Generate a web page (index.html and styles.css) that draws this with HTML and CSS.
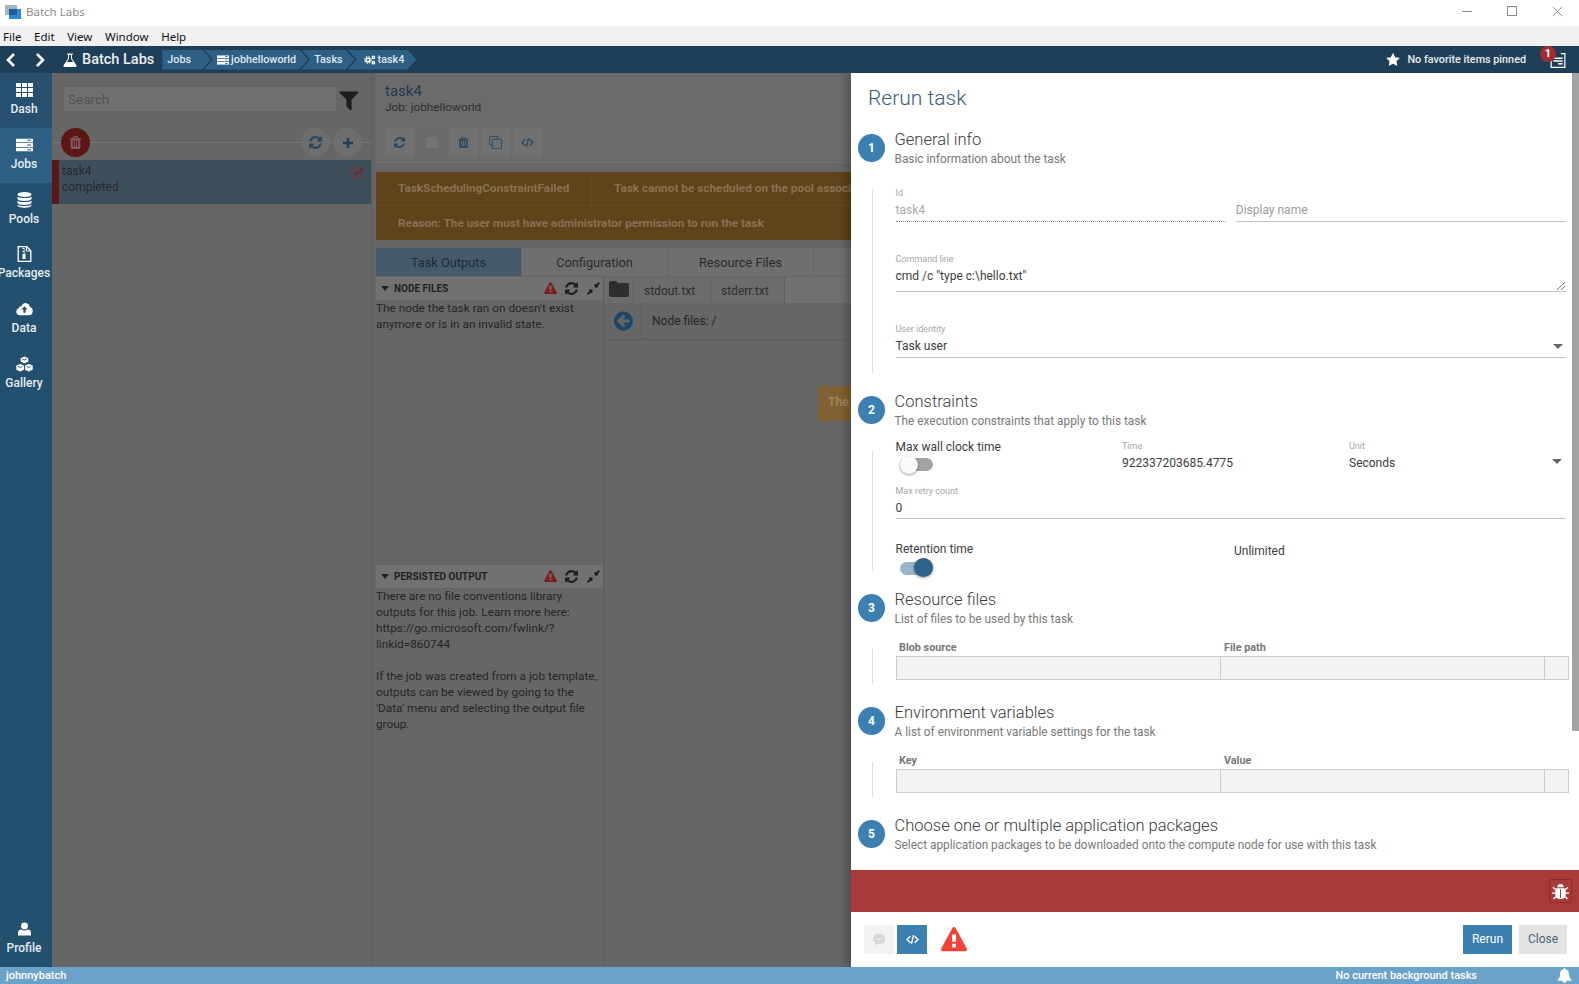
FILE: index.html
```html
<!DOCTYPE html>
<html lang="en">
<head>
<meta charset="utf-8">
<title>Batch Labs</title>
<link rel="stylesheet" href="styles.css">
</head>
<body>
<svg class="defs" width="0" height="0" aria-hidden="true">
  <symbol id="i-refresh" viewBox="0 0 1792 1792"><path d="M1639 1056q0 5-1 7-64 268-268 434.500t-478 166.500q-146 0-282.500-55t-243.500-157l-129 129q-19 19-45 19t-45-19-19-45v-448q0-26 19-45t45-19h448q26 0 45 19t19 45-19 45l-137 137q71 66 161 102t187 36q134 0 250-65t186-179q11-17 53-117 8-23 30-23h192q13 0 22.500 9.500t9.500 22.500zm25-800v448q0 26-19 45t-45 19h-448q-26 0-45-19t-19-45 19-45l138-138q-148-137-349-137-134 0-250 65t-186 179q-11 17-53 117-8 23-30 23h-199q-13 0-22.500-9.500t-9.500-22.500v-7q65-268 270-434.500t480-166.500q146 0 284 55.500t245 156.500l130-129q19-19 45-19t45 19 19 45z"/></symbol>
  <symbol id="i-trash" viewBox="0 0 1792 1792"><path d="M704 1376v-704q0-14-9-23t-23-9h-64q-14 0-23 9t-9 23v704q0 14 9 23t23 9h64q14 0 23-9t9-23zm256 0v-704q0-14-9-23t-23-9h-64q-14 0-23 9t-9 23v704q0 14 9 23t23 9h64q14 0 23-9t9-23zm256 0v-704q0-14-9-23t-23-9h-64q-14 0-23 9t-9 23v704q0 14 9 23t23 9h64q14 0 23-9t9-23zm-544-992h448l-48-117q-7-9-17-11h-317q-10 2-17 11zm928 32v64q0 14-9 23t-23 9h-96v948q0 83-47 143.500t-113 60.500h-832q-66 0-113-58.500t-47-141.500v-952h-96q-14 0-23-9t-9-23v-64q0-14 9-23t23-9h309l70-167q15-37 54-63t79-26h320q40 0 79 26t54 63l70 167h309q14 0 23 9t9 23z"/></symbol>
  <symbol id="i-warn" viewBox="0 0 1792 1792"><path d="M1024 1375v-190q0-14-9.500-23.500t-22.500-9.500h-192q-13 0-22.500 9.500t-9.500 23.500v190q0 14 9.500 23.500t22.500 9.500h192q13 0 22.500-9.500t9.500-23.500zm-2-374l18-459q0-12-10-19-13-11-24-11h-220q-11 0-24 11-10 7-10 21l17 457q0 10 10 16.500t24 6.500h185q14 0 23.500-6.500t10.500-16.500zm-14-934l768 1408q35 63-2 126-17 29-46.500 46t-63.500 17h-1536q-34 0-63.500-17t-46.500-46q-37-63-2-126l768-1408q17-31 47-49t65-18 65 18 47 49z"/></symbol>
  <symbol id="i-filter" viewBox="0 0 1792 1792"><path d="M1595 295q17 41-14 70l-493 493v742q0 42-39 59-13 5-25 5-27 0-45-19l-256-256q-19-19-19-45v-486l-493-493q-31-29-14-70 17-39 59-39h1280q42 0 59 39z"/></symbol>
  <symbol id="i-star" viewBox="0 0 1792 1792"><path d="M1728 647q0 22-26 48l-363 354 86 500q1 7 1 20 0 21-10.500 35.500t-30.500 14.500q-19 0-40-12l-449-236-449 236q-22 12-40 12-21 0-31.500-14.500t-10.500-35.500q0-6 2-20l86-500-364-354q-25-27-25-48 0-37 56-46l502-73 225-455q19-41 49-41t49 41l225 455 502 73q56 9 56 46z"/></symbol>
  <symbol id="i-back" viewBox="0 0 1792 1792"><path d="M1280 960v-128q0-26-19-45t-45-19h-502l189-189q19-19 19-45t-19-45l-91-91q-18-18-45-18t-45 18l-362 362-91 91q-18 18-18 45t18 45l91 91 362 362q18 18 45 18t45-18l91-91q18-18 18-45t-18-45l-189-189h502q26 0 45-19t19-45zm256-64q0 209-103 385.500t-279.500 279.500-385.500 103-385.500-103-279.500-279.500-103-385.500 103-385.500 279.500-279.500 385.500-103 385.500 103 279.500 279.500 103 385.500z"/></symbol>
  <symbol id="i-bell" viewBox="0 0 1792 1792"><path d="M912 1696q0-16-16-16-59 0-101.500-42.500t-42.500-101.500q0-16-16-16t-16 16q0 73 51.500 124.500t124.500 51.500q16 0 16-16zm816-288q0 52-38 90t-90 38h-448q0 106-75 181t-181 75-181-75-75-181h-448q-52 0-90-38t-38-90q50-42 91-88t85-119.500 74.500-158.500 50-206 19.500-260q0-152 117-282.500t307-158.500q-8-19-8-39 0-40 28-68t68-28 68 28 28 68q0 20-8 39 190 28 307 158.500t117 282.500q0 139 19.500 260t50 206 74.500 158.500 85 119.500 91 88z"/></symbol>
  <symbol id="i-code" viewBox="0 0 24 24"><path d="M8 6l-6 6 6 6M16 6l6 6-6 6M14 4l-4 16" fill="none" stroke="currentColor" stroke-width="2.600"/></symbol>
  <symbol id="i-server" viewBox="0 0 18 14"><path d="M0 0h18v4H0zM0 5h18v4H0zM0 10h18v4H0z"/><path d="M12 1.500h4v1h-4zM12 6.500h4v1h-4zM12 11.500h4v1h-4z" fill="#24506f"/></symbol>
  <symbol id="i-cog" viewBox="0 0 26 22"><circle cx="8.500" cy="11" r="4" fill="none" stroke="currentColor" stroke-width="3.500"/><circle cx="8.500" cy="11" r="6.800" fill="none" stroke="currentColor" stroke-width="3" stroke-dasharray="3 2.340"/><circle cx="20.500" cy="5" r="2.600" fill="none" stroke="currentColor" stroke-width="3"/><circle cx="20.500" cy="17" r="2.600" fill="none" stroke="currentColor" stroke-width="3"/></symbol>
  <symbol id="i-compress" viewBox="0 0 20 20"><path d="M19 1l-6 6M13 3v4h4M1 19l6-6M3 13h4v4" fill="none" stroke="currentColor" stroke-width="2.800"/></symbol>
</svg>

<header class="titlebar">
  <svg class="app-logo" viewBox="0 0 16 14"><rect width="12" height="10" fill="#9fb6c6"/><rect x="4" y="4" width="12" height="10" fill="#2d8ad6"/><rect x="4" y="4" width="8" height="6" fill="#1b5d96"/></svg>
  <span class="app-title">Batch Labs</span>
  <div class="win-controls">
    <span class="win-min"></span>
    <span class="win-max"></span>
    <svg class="win-close" viewBox="0 0 12 12"><path d="M1 1l10 10M11 1L1 11" stroke="#8a8a8a" stroke-width="1" fill="none"/></svg>
  </div>
</header>
<nav class="menubar"><span>File</span><span>Edit</span><span>View</span><span>Window</span><span>Help</span></nav>

<div class="topbar">
  <svg class="nav-arrow" viewBox="0 0 10 16"><path d="M8 2L2 8l6 6" fill="none" stroke="#fff" stroke-width="2.600"/></svg>
  <svg class="nav-arrow nav-fwd" viewBox="0 0 10 16"><path d="M2 2l6 6-6 6" fill="none" stroke="#fff" stroke-width="2.600"/></svg>
  <div class="brand">
    <svg class="flask" viewBox="0 0 14 14"><path d="M4 .5h6v1H9v4l4.500 7q.5 1-.7 1.500H1.200Q0 13.500.5 12.500L5 5.500v-4H4z" fill="#fff"/><path d="M6 2v3.800L3.800 9h6.400L8 5.800V2z" fill="#1f3f58"/></svg>
    <span>Batch Labs</span>
  </div>
  <ol class="crumbs">
    <li class="crumb crumb-first">Jobs</li>
    <li class="crumb"><svg class="crumb-icon" viewBox="0 0 18 14" fill="#fff"><use href="#i-server"/></svg>jobhelloworld</li>
    <li class="crumb">Tasks</li>
    <li class="crumb crumb-last"><svg class="crumb-icon" viewBox="0 0 26 22" color="#fff"><use href="#i-cog"/></svg>task4</li>
  </ol>
  <div class="favorites">
    <svg class="fav-star" fill="#fff"><use href="#i-star"/></svg>
    <span>No favorite items pinned</span>
  </div>
  <div class="notes">
    <svg viewBox="0 0 16 16" class="notes-icon"><path d="M.7 2.700h3M11 .7h4.300v14.600H.7V2.700" fill="none" stroke="#fff" stroke-width="1.300"/><path d="M3 5.500h10M3 8.500h10M8 11.500h5" stroke="#fff" stroke-width="1.600"/></svg>
    <span class="badge">1</span>
  </div>
</div>

<div class="workspace">
  <aside class="sidebar">
    <a class="nav-item nav-dash">
      <svg class="nav-icon" viewBox="0 0 17 14" fill="#fff"><path d="M0 0h5v4H0zM6 0h5v4H6zM12 0h5v4h-5zM0 5h5v4H0zM6 5h5v4H6zM12 5h5v4h-5zM0 10h5v4H0zM6 10h5v4H6zM12 10h5v4h-5z"/></svg>
      <span>Dash</span>
    </a>
    <a class="nav-item nav-active">
      <svg class="nav-icon" viewBox="0 0 18 14" fill="#fff"><use href="#i-server"/></svg>
      <span>Jobs</span>
    </a>
    <a class="nav-item">
      <svg class="nav-icon" viewBox="0 0 14 16" fill="#fff"><ellipse cx="7" cy="2.500" rx="7" ry="2.500"/><path d="M0 4.500C1 6.500 13 6.500 14 4.500V7c-1 2.500-13 2.500-14 0zM0 8.500c1 2 13 2 14 0V11c-1 2.500-13 2.500-14 0zM0 12.500c1 2 13 2 14 0v1c-1 3-13 3-14 0z"/></svg>
      <span>Pools</span>
    </a>
    <a class="nav-item">
      <svg class="nav-icon" viewBox="0 0 14 16"><path d="M.7.700h8.500l4.100 4.100v10.500H.7z" fill="none" stroke="#fff" stroke-width="1.300"/><path d="M9 1v4h4" fill="none" stroke="#fff"/><path d="M5 2h2v1H5zM6 3.500h2v1H6zM5 5h2v1H5zM6 6.500h2v1H6zM5 8h3v5H5z" fill="#fff"/></svg>
      <span>Packages</span>
    </a>
    <a class="nav-item">
      <svg class="nav-icon" viewBox="0 0 18 14"><path d="M4.500 13.500Q.5 13.500.3 9.800.3 7 2.800 6.300 3.200 3.800 5.800 4 7.300.5 10.800.8q3.500.4 3.900 4.200 3 .7 3 4 0 4.500-4 4.500z" fill="#fff"/><path d="M9 4L5.800 7.500h2V11h2.400V7.500h2z" fill="#24506f"/></svg>
      <span>Data</span>
    </a>
    <a class="nav-item">
      <svg class="nav-icon" viewBox="0 0 16 14" fill="#fff"><path d="M8 0l3.600 1.500v3.400L8 6.400 4.400 4.900V1.500zM4 7l3.500 1.500v3.800L4 14 .3 12.300V8.500zM12 7l3.700 1.500v3.800L12 14l-3.500-1.700V8.500z"/><path d="M5.800 2.300L8 3.200l2.200-.9M1.700 9.300L4 10.200l2.100-.9M9.900 9.300l2.100.9 2.300-.9" fill="none" stroke="#24506f" stroke-width=".8"/></svg>
      <span>Gallery</span>
    </a>
    <a class="nav-item nav-profile">
      <svg class="nav-icon" viewBox="0 0 14 14" fill="#fff"><circle cx="7" cy="3.700" r="3.700"/><path d="M0 14v-2.500Q0 7.800 3.500 7.500 7 9.500 10.500 7.500 14 7.800 14 11.500V14z"/></svg>
      <span>Profile</span>
    </a>
  </aside>

  <div class="stage">
    <section class="list-pane">
      <div class="search-row">
        <div class="search-box">Search</div>
        <svg class="filter-icon" fill="#1d1d1d"><use href="#i-filter"/></svg>
      </div>
      <div class="list-actions">
        <button class="fab fab-danger"><svg class="fab-svg" fill="#7f5a5a"><use href="#i-trash"/></svg></button>
        <span class="fab-spacer"></span>
        <button class="fab"><svg class="fab-svg" fill="#2a475e"><use href="#i-refresh"/></svg></button>
        <button class="fab"><svg class="plus-svg" viewBox="0 0 12 12"><path d="M6 1v10M1 6h10" stroke="#1f3f58" stroke-width="2.500"/></svg></button>
      </div>
      <div class="list-row">
        <div class="list-row-text">task4<br>completed</div>
        <svg class="row-check" viewBox="0 0 12 10"><path d="M10 6v3.500H.5V.5h8" fill="none" stroke="#7a3038" stroke-width="1"/><path d="M3 4l2.500 2.500L11 1" fill="none" stroke="#7a2028" stroke-width="1.800"/></svg>
      </div>
    </section>

    <section class="detail">
      <div class="detail-head">
        <h1>task4</h1>
        <p>Job: jobhelloworld</p>
        <div class="tool-row">
          <button class="tool"><svg class="tool-svg" fill="#2a475e"><use href="#i-refresh"/></svg></button>
          <button class="tool tool-off"><span class="stop"></span></button>
          <button class="tool"><svg class="tool-svg" fill="#2c4a60"><use href="#i-trash"/></svg></button>
          <button class="tool"><svg class="tool-svg" viewBox="0 0 14 14"><path d="M.5.500h9v9h-9z" fill="none" stroke="#2c4a60"/><path d="M3.500 3.500h10v10h-10z" fill="#717171" stroke="#2c4a60"/></svg></button>
          <button class="tool"><svg class="tool-svg" color="#2c4a60"><use href="#i-code"/></svg></button>
        </div>
      </div>
      <div class="alert">
        <div class="alert-row">
          <div class="alert-code">TaskSchedulingConstraintFailed</div>
          <div class="alert-msg">Task cannot be scheduled on the pool associ</div>
        </div>
        <div class="alert-reason">Reason: The user must have administrator permission to run the task</div>
      </div>
      <div class="tabs">
        <div class="tab tab-active">Task Outputs</div>
        <div class="tab">Configuration</div>
        <div class="tab">Resource Files</div>
        <div class="tab"></div>
      </div>
      <div class="outputs">
        <div class="files-col">
          <div class="files-head">
            <span class="caret"></span><span class="files-title">NODE FILES</span>
            <svg class="fh-warn" fill="#7a1f1f"><use href="#i-warn"/></svg>
            <svg class="fh-ref" fill="#1d1d1d"><use href="#i-refresh"/></svg>
            <svg class="fh-cmp" color="#1d1d1d"><use href="#i-compress"/></svg>
          </div>
          <div class="files-body">The node the task ran on doesn't exist anymore or is in an invalid state.</div>
          <div class="files-head">
            <span class="caret"></span><span class="files-title">PERSISTED OUTPUT</span>
            <svg class="fh-warn" fill="#7a1f1f"><use href="#i-warn"/></svg>
            <svg class="fh-ref" fill="#1d1d1d"><use href="#i-refresh"/></svg>
            <svg class="fh-cmp" color="#1d1d1d"><use href="#i-compress"/></svg>
          </div>
          <div class="files-body files-body-last">There are no file conventions library outputs for this job. Learn more here: https://go.microsoft.com/fwlink/?linkid=860744<br><br>If the job was created from a job template, outputs can be viewed by going to the 'Data' menu and selecting the output file group.</div>
        </div>
        <div class="viewer">
          <div class="viewer-tabs">
            <div class="vtab vtab-folder"><svg class="folder" viewBox="0 0 20 16"><path d="M2 0h5l2 2h9q2 0 2 2v10q0 2-2 2H2q-2 0-2-2V2q0-2 2-2z" fill="#2e2e2e"/></svg></div>
            <div class="vtab vtab-a">stdout.txt</div>
            <div class="vtab vtab-b">stderr.txt</div>
          </div>
          <div class="path-row">
            <div class="path-back"><svg class="back-svg" fill="#1d4666"><use href="#i-back"/></svg></div>
            <div class="path-text">Node files: /</div>
          </div>
          <div class="viewer-body"><div class="viewer-note">The</div></div>
        </div>
      </div>
    </section>

    <aside class="panel">
      <div class="panel-scroll">
        <h2 class="panel-title">Rerun task</h2>

        <section class="step">
          <div class="step-head">
            <span class="step-num">1</span>
            <div><h3>General info</h3><p>Basic information about the task</p></div>
          </div>
          <div class="step-body body-general">
            <div class="field-pair">
              <div class="field field-readonly"><label>Id</label><div class="value">task4</div></div>
              <div class="field field-ph"><label>&nbsp;</label><div class="value">Display name</div></div>
            </div>
            <div class="field field-cmd">
              <label>Command line</label>
              <div class="value">cmd /c "type c:\hello.txt"</div>
              <svg class="grip" viewBox="0 0 8 8"><path d="M8 0L0 8M8 4L4 8" stroke="#777" stroke-width="1"/></svg>
            </div>
            <div class="field field-select field-user">
              <label>User identity</label>
              <div class="value">Task user</div>
              <span class="select-arrow"></span>
            </div>
          </div>
        </section>

        <section class="step step-next">
          <div class="step-head">
            <span class="step-num">2</span>
            <div><h3>Constraints</h3><p>The execution constraints that apply to this task</p></div>
          </div>
          <div class="step-body body-constraints">
            <div class="wall-row">
              <div class="toggle-block">
                <div class="toggle-label">Max wall clock time</div>
                <div class="toggle"><span class="thumb"></span></div>
              </div>
              <div class="field field-bare"><label>Time</label><div class="value">922337203685.4775</div></div>
              <div class="field field-bare field-select"><label>Unit</label><div class="value">Seconds</div><span class="select-arrow"></span></div>
            </div>
            <div class="field field-retry"><label>Max retry count</label><div class="value">0</div></div>
            <div class="retention-row">
              <div class="toggle-block">
                <div class="toggle-label">Retention time</div>
                <div class="toggle toggle-on"><span class="thumb"></span></div>
              </div>
              <div class="unlimited">Unlimited</div>
            </div>
          </div>
        </section>

        <section class="step step-next">
          <div class="step-head">
            <span class="step-num">3</span>
            <div><h3>Resource files</h3><p>List of files to be used by this task</p></div>
          </div>
          <div class="step-body body-table">
            <div class="t-head"><span>Blob source</span><span>File path</span></div>
            <div class="t-row"><span></span><span></span><span></span></div>
          </div>
        </section>

        <section class="step step-next">
          <div class="step-head">
            <span class="step-num">4</span>
            <div><h3>Environment variables</h3><p>A list of environment variable settings for the task</p></div>
          </div>
          <div class="step-body body-table">
            <div class="t-head"><span>Key</span><span>Value</span></div>
            <div class="t-row"><span></span><span></span><span></span></div>
          </div>
        </section>

        <section class="step step-next">
          <div class="step-head">
            <span class="step-num">5</span>
            <div><h3>Choose one or multiple application packages</h3><p>Select application packages to be downloaded onto the compute node for use with this task</p></div>
          </div>
        </section>
      </div>

      <div class="error-bar">
        <button class="bug-btn">
          <svg class="bug" viewBox="0 0 16 16" fill="#fff"><path d="M5 4q0-3 3-3t3 3zM4 5h8q1 0 1 1v5q0 4-5 4t-5-4V6q0-1 1-1z"/><path d="M3 6L1 4M13 6l2-2M3 9.500H0M13 9.500h3M3.500 13L1.500 15M12.500 13l2 2" stroke="#fff" stroke-width="1.300" fill="none"/><path d="M7.500 6h1v8h-1z" fill="#a83a3a"/></svg>
        </button>
      </div>

      <div class="actions">
        <button class="act-icon act-muted"><svg class="comment" viewBox="0 0 14 14"><path d="M7 1q6 0 6 5t-6 5q-1 0-2-.2Q3.500 12.500 2 12.500q1-1 1-2.500Q1 8.500 1 6q0-5 6-5z" fill="#d6d6d6"/><path d="M4 5.500h1.400v1.400H4zM6.300 5.500h1.400v1.400H6.300zM8.600 5.500H10v1.400H8.600z" fill="#f3f3f3"/></svg></button>
        <button class="act-icon act-primary"><svg class="act-code" color="#fff"><use href="#i-code"/></svg></button>
        <svg class="big-warn" fill="#f44336"><use href="#i-warn"/></svg>
        <span class="act-spacer"></span>
        <button class="btn btn-primary">Rerun</button>
        <button class="btn btn-plain">Close</button>
      </div>
      <div class="panel-scrollbar"></div>
    </aside>
  </div>
</div>

<footer class="statusbar">
  <span class="user">johnnybatch</span>
  <span class="tasks">No current background tasks</span>
  <svg class="status-bell" fill="#fff"><use href="#i-bell"/></svg>
</footer>
</body>
</html>
```

FILE: styles.css
```css
* { box-sizing: border-box; }
html, body { margin: 0; padding: 0; height: 100%; }
body {
  width: 1579px;
  height: 984px;
  display: flex;
  flex-direction: column;
  overflow: hidden;
  background: #fff;
  font-family: Roboto, "Liberation Sans", sans-serif;
  font-size: 12px;
  color: #222;
}
.defs { position: absolute; }
button { border: 0; padding: 0; font: inherit; }
h1, h2, h3, p { margin: 0; font-weight: normal; }

/* window chrome */
.titlebar { height: 26px; flex: none; display: flex; align-items: center; padding-left: 5px; background: #fff; }
.app-logo { width: 16px; height: 14px; margin-right: 5px; margin-bottom: 3px; }
.app-title { font: 11.500px "Noto Sans", sans-serif; color: #8d8d8d; margin-bottom: 4px; }
.win-controls { margin-left: auto; display: flex; align-items: center; height: 100%; padding-bottom: 4px; }
.win-min { width: 10px; height: 1px; background: #8a8a8a; margin-right: 35px; }
.win-max { width: 10px; height: 10px; border: 1px solid #8a8a8a; margin-right: 35px; }
.win-close { width: 11px; height: 11px; margin-right: 16px; }
.menubar { height: 20px; flex: none; display: flex; align-items: center; gap: 12.600px; padding-left: 3px; background: #f0f0f0; font: 11.500px "Noto Sans", sans-serif; color: #111; }

/* top bar */
.topbar { height: 27px; flex: none; display: flex; align-items: center; background: #1f3f58; color: #fff; position: relative; }
.nav-arrow { width: 10px; height: 16px; margin-left: 6px; }
.nav-fwd { margin-left: 19px; }
.brand { display: flex; align-items: center; margin-left: 18px; font-size: 14.500px; font-weight: 500; color: #e9eef2; }
.flask { width: 14px; height: 14px; margin-right: 5px; }
.crumbs { list-style: none; display: flex; margin: 0 0 0 8px; padding: 0; height: 20px; }
.crumb { display: flex; align-items: center; height: 20px; background: #2e6085; font-size: 10.800px; font-weight: 500; color: #dfe8ef; padding: 0 12px 0 13px; margin-right: -7px; clip-path: polygon(0 0, calc(100% - 9px) 0, 100% 50%, calc(100% - 9px) 100%, 0 100%, 9px 50%); }
.crumb-first { padding: 0 20px 0 5px; clip-path: polygon(0 0, calc(100% - 9px) 0, 100% 50%, calc(100% - 9px) 100%, 0 100%); }
.crumb-last { padding-left: 16px; }
.crumb-icon { width: 12px; height: 10px; margin-right: 2px; }
.favorites { margin-left: auto; display: flex; align-items: center; font-size: 10.800px; font-weight: 500; color: #e8edf1; margin-right: 14px; }
.fav-star { width: 14px; height: 14px; margin-right: 7px; }
.notes { width: 39px; height: 27px; position: relative; }
.notes-icon { position: absolute; left: 10px; top: 7px; width: 16px; height: 15px; }
.badge { position: absolute; left: 0; top: 0; width: 16px; height: 16px; border-radius: 50%; background: #a32c34; color: #fff; font-size: 11px; font-weight: 700; text-align: center; line-height: 16px; }

/* layout */
.workspace { flex: 1; display: flex; min-height: 0; }
.sidebar { width: 52px; flex: none; display: flex; flex-direction: column; background: #24506f; }
.nav-item { height: 54.800px; flex: none; display: flex; flex-direction: column; align-items: center; padding: 9px 4px 0 0; color: #e6ecf1; font-size: 12px; font-weight: 500; }
.nav-item span { line-height: 16px; margin-top: 3px; white-space: nowrap; }
.nav-dash { background: #274f70; }
.nav-active { background: #2e6085; }
.nav-icon { width: 17px; height: 16px; flex: none; }
.nav-profile { margin-top: auto; }
.nav-profile .nav-icon { width: 13px; }

.stage { flex: 1; min-width: 0; display: flex; position: relative; overflow: hidden; background: #666; }

/* task list (dimmed) */
.list-pane { width: 320px; flex: none; border-right: 1px solid #5c5c5c; color: #2a2a2a; }
.search-row { display: flex; align-items: center; padding: 14px 0 0 12px; height: 38px; }
.search-box { width: 272px; height: 24px; background: #707070; color: #525252; font-size: 13.500px; line-height: 24px; padding-left: 4px; }
.filter-icon { width: 24px; height: 24px; margin-left: 1px; margin-top: 1px; }
.list-actions { display: flex; align-items: center; height: 29px; padding: 0 9px; margin-top: 17px; background: linear-gradient(#777, #777) 0 14px / 100% 1px no-repeat; margin-bottom: 3px; }
.fab { width: 29px; height: 29px; border-radius: 50%; background: #6e6e6e; display: flex; align-items: center; justify-content: center; margin-left: 3px; }
.fab-danger { background: #5c1616; margin-left: 0; }
.fab-spacer { flex: 1; }
.fab-svg { width: 15px; height: 15px; }
.plus-svg { width: 12px; height: 12px; }
.list-row { height: 44px; background: #3e4f5c; border-left: 7px solid #5c1616; position: relative; font-size: 12px; line-height: 16px; padding: 3px 3px; color: #252a2e; }
.row-check { position: absolute; right: 7px; top: 7px; width: 13px; height: 11px; }

/* detail (dimmed) */
.detail { width: 475px; flex: none; margin-left: 4px; color: #2a2a2a; overflow: hidden; }
.detail-head { height: 90px; padding: 9px 9px 0; background: #6b6b6b; border-bottom: 1px solid #707070; }
.detail-head h1 { font-size: 15px; line-height: 18px; color: #1f3a4f; }
.detail-head p { font-size: 11.800px; line-height: 14px; color: #2e2e2e; }
.tool-row { display: flex; gap: 3px; margin-top: 14px; }
.tool { width: 29px; height: 29px; background: #717171; display: flex; align-items: center; justify-content: center; }
.tool-off { background: #6a6a6a; }
.tool-svg { width: 13px; height: 13px; }
.stop { width: 11px; height: 11px; background: #747474; }
.alert { margin-top: 9px; height: 68px; background: #5f431a; color: #877252; font-weight: 700; font-size: 11.800px; }
.alert-row { display: flex; height: 34px; border-bottom: 1px solid #6a4a1c; }
.alert-code { width: 216px; flex: none; padding-left: 22px; line-height: 33px; border-right: 1px solid #6a4a1c; }
.alert-msg { flex: 1; min-width: 0; overflow: hidden; padding-left: 22px; line-height: 33px; white-space: nowrap; }
.alert-reason { padding-left: 22px; line-height: 34px; }
.tabs { display: flex; margin-top: 8px; height: 28px; gap: 1px; }
.tab { width: 145px; flex: none; background: #6f6f6f; color: #2b2b2b; font-size: 12.800px; text-align: center; line-height: 29px; }
.tab-active { background: #455a6a; color: #1f2a33; }
.outputs { display: flex; height: 692px; margin-top: 1px; }
.files-col { width: 228px; flex: none; border-right: 1px solid #5c5c5c; }
.files-head { display: flex; align-items: center; height: 23px; background: #717171; padding-left: 5px; padding-right: 3px; color: #222; }
.caret { width: 0; height: 0; border: 4px solid transparent; border-top: 5px solid #222; border-bottom: 0; margin-right: 5px; }
.files-title { font-size: 10px; font-weight: 700; flex: 1; }
.fh-warn { width: 13px; height: 13px; margin-right: 7px; }
.fh-ref { width: 15px; height: 15px; margin-right: 8px; }
.fh-cmp { width: 13px; height: 13px; }
.files-body { height: 265px; line-height: 16px; font-size: 11.800px; color: #252525; }
.files-body-last { height: auto; }
.viewer { flex: 1; min-width: 0; }
.viewer-tabs { display: flex; height: 26px; background: #707070; }
.vtab { background: #6c6c6c; border-right: 1px solid #5f5f5f; font-size: 12px; line-height: 28px; color: #2e2e2e; padding-left: 10px; }
.vtab-folder { width: 30px; padding: 4px 0 0 5px; }
.vtab-a { width: 77px; }
.vtab-b { width: 74px; }
.folder { width: 20px; height: 16px; display: block; }
.path-row { display: flex; height: 37px; border-bottom: 1px solid #5c5c5c; }
.path-back { width: 38px; border-right: 1px solid #5c5c5c; display: flex; align-items: center; justify-content: center; padding-left: 4px; }
.back-svg { width: 22px; height: 22px; }
.path-text { padding: 11px 0 0 10px; font-size: 12px; color: #252525; }
.viewer-body { padding: 46px 0 0 214px; }
.viewer-note { height: 35px; background: #806232; color: #9c8560; font-weight: 700; line-height: 33px; padding-left: 10px; white-space: nowrap; }

/* rerun panel */
.panel { position: absolute; left: 799px; top: 0; right: 0; bottom: 0; display: flex; flex-direction: column; background: #fff; box-shadow: -4px 0 8px rgba(0, 0, 0, .25); }
.panel-scroll { flex: 1; min-height: 0; overflow: hidden; padding: 0 13px 0 7px; }
.panel-title { font-size: 21px; font-weight: 300; line-height: 24px; color: #3a5d79; margin: 13px 0 0 10px; }
.step { margin-top: 19px; }
.step-next { margin-top: 18px; }
.step-head { display: flex; color: #444; }
.step-num { width: 27px; height: 28px; margin: 5px 9.500px 0 0; flex: none; border-radius: 50%; background: #3c7fb1; color: #fff; font-size: 12px; font-weight: 700; text-align: center; line-height: 28px; }
.step-head h3 { font-size: 16.500px; font-weight: 300; line-height: 20px; padding-top: 1px; height: 21px; color: #3c3c3c; white-space: nowrap; }
.step-head p { font-size: 11.850px; line-height: 19px; color: #7a7a7a; white-space: nowrap; }
.step-body { display: flow-root; margin: 20px 0 0 14px; padding-left: 22.500px; border-left: 1px solid #ddd; }
.body-general { height: 184px; }
.field { position: relative; border-bottom: 1px solid #c4c4c4; }
.field label { display: block; height: 12px; line-height: 12px; font-size: 9px; color: #a5a5a5; }
.field .value { margin-top: 2px; height: 18px; line-height: 18px; font-size: 12px; color: #3d3d3d; }
.field-pair { display: flex; gap: 10px; margin-top: -2px; }
.field-pair .field { flex: 1; padding-bottom: 2px; }
.field-readonly { border-bottom: 1px dotted #888; }
.field-pair .field-readonly .value { color: #a8a8a8; }
.field-pair .field-ph .value { color: #9a9a9a; }
.field-cmd { margin-top: 31px; padding-bottom: 6px; }
.grip { position: absolute; right: 1px; bottom: 1px; width: 8px; height: 8px; }
.field-user { margin-top: 31px; padding-bottom: 2px; }
.select-arrow { position: absolute; right: 3px; bottom: 8px; border: 5px solid transparent; border-top-color: #666; border-bottom: 0; }
.body-constraints { height: 120px; }
.wall-row { display: flex; margin-top: -12px; height: 46px; }
.wall-row .toggle-block { width: 226.500px; }
.field-bare { border-bottom: 0; padding-top: 1px; }
.wall-row .field-bare { width: 227px; }
.wall-row .field-select { width: 216px; }
.wall-row .select-arrow { bottom: 21px; }
.toggle-label { font-size: 12px; line-height: 16px; height: 17px; color: #3d3d3d; }
.toggle { position: relative; width: 33px; height: 19px; margin-left: 4px; }
.toggle::before { content: ""; position: absolute; left: 0; right: 0; top: 2px; height: 13px; border-radius: 7px; background: #a3a3a3; }
.thumb { position: absolute; left: 0; top: 0; width: 18px; height: 18px; border-radius: 50%; background: #fafafa; box-shadow: 0 1px 3px rgba(0, 0, 0, .4); }
.toggle-on::before { background: #9ab4c9; top: 4px; }
.toggle-on .thumb { left: auto; right: 0; background: #2e6289; width: 19px; height: 19px; }
.field-retry { padding-bottom: 1px; }
.retention-row { display: flex; margin-top: 22px; height: 37px; margin-bottom: -7px; }
.retention-row .toggle-block { width: 338.500px; }
.unlimited { font-size: 12px; line-height: 16px; margin-top: 2px; color: #3d3d3d; }
.body-table { height: 35px; }
.t-head { display: flex; margin-top: -7px; height: 14px; font-size: 10.800px; font-weight: 700; color: #777; line-height: 12px; padding: 0 0 2px 3.500px; }
.t-head span { width: 325px; }
.t-row { display: flex; height: 24px; margin: 0 -3px 0 .5px; background: #f3f3f3; border: 1px solid #ccc; }
.t-row span { width: 324px; border-right: 1px solid #ccc; }
.t-row span:last-child { flex: 1; border-right: 0; }

.error-bar { height: 42px; flex: none; background: #a83a3a; display: flex; align-items: center; justify-content: flex-end; padding-right: 7px; }
.bug-btn { width: 23px; height: 24px; background: #a83a3a; border: 1px solid #8a2c2c; border-radius: 2px; display: flex; align-items: center; justify-content: center; }
.bug { width: 17px; height: 17px; }
.actions { height: 55px; flex: none; display: flex; align-items: center; padding: 0 12px 0 13px; }
.act-icon { width: 30px; height: 29px; display: flex; align-items: center; justify-content: center; }
.act-muted { background: #f3f3f3; margin-right: 3px; }
.act-primary { background: #3c7fb1; }
.comment { width: 14px; height: 14px; }
.act-code { width: 13px; height: 13px; }
.big-warn { width: 26px; height: 26px; margin-left: 14px; }
.act-spacer { flex: 1; }
.btn { height: 29px; font-size: 12px; padding-bottom: 2px; }
.btn-primary { width: 49px; background: #3c7fb1; color: #fff; margin-right: 7px; }
.btn-plain { width: 48px; background: #e3e3e3; color: #4a6377; }
.panel-scrollbar { position: absolute; right: 0; top: 0; width: 7px; height: 658px; background: #a3a3a3; }

/* status bar */
.statusbar { height: 17px; flex: none; display: flex; align-items: center; background: #6ba2c9; color: #fff; font-size: 11px; font-weight: 500; padding-left: 6px; }
.tasks { margin-left: auto; margin-right: 80px; font-size: 10.950px; }
.status-bell { width: 15px; height: 15px; margin-right: 7px; }
```
